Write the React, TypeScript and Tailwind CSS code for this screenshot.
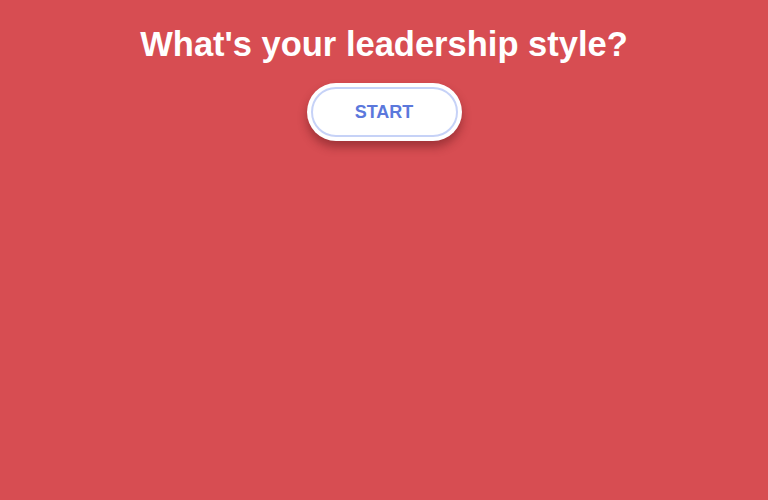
import React from "react";

export default function App() {
  return (
    <div
      className="min-h-[500px] w-full bg-[#d74d52] flex flex-col items-center pt-[23px]"
      style={{ fontFamily: '"Liberation Sans", Arial, sans-serif' }}
    >
      <h1 className="text-[34.5px] leading-[42px] font-bold text-white">
        What's your leadership style?
      </h1>
      <button
        type="button"
        className="mt-[18px] w-[155px] h-[58px] rounded-full bg-white p-[4px] shadow-[0_6px_10px_rgba(90,20,25,0.45)]"
      >
        <span className="flex h-full w-full items-center justify-center rounded-full border-2 border-[#c6d2f7] pt-[1px] text-[18px] font-bold text-[#5b78dc]">
          START
        </span>
      </button>
    </div>
  );
}
